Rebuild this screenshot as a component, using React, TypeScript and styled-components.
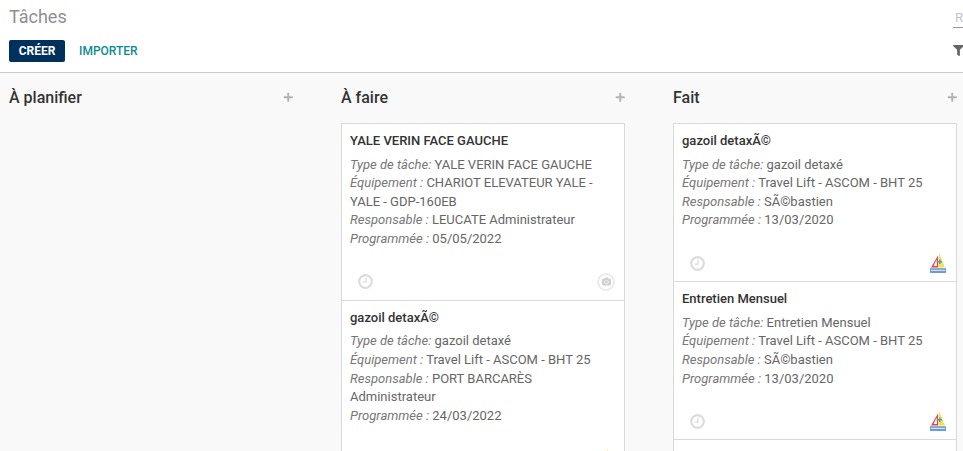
import React, { FC } from 'react';
import styled, { createGlobalStyle } from 'styled-components';
import { FaCamera, FaFilter, FaPlus } from 'react-icons/fa';

type Task = {
  title: string;
  type: string;
  equipment: string;
  owner: string;
  date: string;
  badge: 'camera' | 'logo';
};

type Column = {
  name: string;
  tasks: Task[];
};

const COLUMNS: Column[] = [
  { name: 'À planifier', tasks: [] },
  {
    name: 'À faire',
    tasks: [
      {
        title: 'YALE VERIN FACE GAUCHE',
        type: 'YALE VERIN FACE GAUCHE',
        equipment: 'CHARIOT ELEVATEUR YALE - YALE - GDP-160EB',
        owner: 'LEUCATE Administrateur',
        date: '05/05/2022',
        badge: 'camera',
      },
      {
        title: 'gazoil detaxÃ©',
        type: 'gazoil detaxé',
        equipment: 'Travel Lift - ASCOM - BHT 25',
        owner: 'PORT BARCARÈS Administrateur',
        date: '24/03/2022',
        badge: 'logo',
      },
    ],
  },
  {
    name: 'Fait',
    tasks: [
      {
        title: 'gazoil detaxÃ©',
        type: 'gazoil detaxé',
        equipment: 'Travel Lift - ASCOM - BHT 25',
        owner: 'SÃ©bastien',
        date: '13/03/2020',
        badge: 'logo',
      },
      {
        title: 'Entretien Mensuel',
        type: 'Entretien Mensuel',
        equipment: 'Travel Lift - ASCOM - BHT 25',
        owner: 'SÃ©bastien',
        date: '13/03/2020',
        badge: 'logo',
      },
      {
        title: 'Entretien Mensuel',
        type: 'Entretien Mensuel',
        equipment: 'Travel Lift - ASCOM - BHT 25',
        owner: 'SÃ©bastien',
        date: '13/03/2020',
        badge: 'logo',
      },
    ],
  },
];

// Little sailboat logo of the harbour
const SailLogo: FC = () => (
  <LogoSvg viewBox="0 0 16 20" aria-hidden="true">
    <path d="M9 0 L15 14.5 L8 14.5 Z" fill="#f7e04f" />
    <path d="M8 2.5 L1 14.5 L8 14.5 Z" fill="#e2454d" />
    <path d="M6.6 6.5 L3.6 13 L7 13 Z" fill="#fff" />
    <path d="M9 6.6 h1.5 v1.5 h1.5 v1.5 h-1.5 v1.5 h-1.5 v-1.5 h-1.5 v-1.5 h1.5 Z" fill="#4aa5b5" />
    <rect x="0" y="15.2" width="16" height="4.8" fill="#6d9bd4" />
    <rect x="1" y="16.8" width="14" height="1.2" fill="#d5e1f1" />
  </LogoSvg>
);

// Clock as in the reference, hands at nine o'clock
const ClockIcon: FC = () => (
  <ClockSvg viewBox="0 0 15 15" aria-hidden="true">
    <circle cx="7.5" cy="7.5" r="6.3" fill="none" stroke="currentColor" strokeWidth="2.2" />
    <path d="M8 3.6 V8.1 H4.8" fill="none" stroke="currentColor" strokeWidth="1.3" />
  </ClockSvg>
);

const TaskCard: FC<{ task: Task }> = ({ task }) => (
  <Card>
    <CardTitle>{task.title}</CardTitle>
    <CardBody>
      <Line>
        <Label>Type de tâche:</Label> {task.type}
      </Line>
      <Line>
        <Label>Équipement :</Label> {task.equipment}
      </Line>
      <Line>
        <Label>Responsable :</Label> {task.owner}
      </Line>
      <Line>
        <Label>Programmée :</Label> {task.date}
      </Line>
    </CardBody>
    <CardFooter>
      <ClockIcon />
      {task.badge === 'camera' ? (
        <CameraBadge>
          <FaCamera />
        </CameraBadge>
      ) : (
        <SailLogo />
      )}
    </CardFooter>
  </Card>
);

const App: FC = () => (
  <>
    <GlobalStyle />
    <Page>
      <ControlPanel>
        <LeftPanel>
          <PageTitle>Tâches</PageTitle>
          <Buttons>
            <PrimaryButton>CRÉER</PrimaryButton>
            <LinkButton>IMPORTER</LinkButton>
          </Buttons>
        </LeftPanel>
        <RightPanel>
          <SearchInput placeholder="Rechercher..." />
          <FilterRow>
            <FaFilter />
            <span>Filtres</span>
          </FilterRow>
        </RightPanel>
      </ControlPanel>

      <Board>
        {COLUMNS.map((column) => (
          <BoardColumn key={column.name}>
            <ColumnHeader>
              <ColumnTitle>{column.name}</ColumnTitle>
              <AddIcon />
            </ColumnHeader>
            {column.tasks.map((task, i) => (
              <TaskCard key={i} task={task} />
            ))}
          </BoardColumn>
        ))}
      </Board>
    </Page>
  </>
);

export default App;

/* Styled components */

const GlobalStyle = createGlobalStyle`
  html, body {
    margin: 0;
    padding: 0;
    overflow: hidden;
    background: #f9f9f9;
  }

  * {
    box-sizing: border-box;
  }
`;

const Page = styled.div`
  width: 963px;
  height: 451px;
  overflow: hidden;
  display: flex;
  flex-direction: column;
  font-family: Roboto, 'Noto Sans', sans-serif;
  font-size: 13px;
`;

const ControlPanel = styled.header`
  flex: none;
  height: 73px;
  display: flex;
  overflow: hidden;
  background: #fff;
  border-bottom: 1px solid #cccccc;
`;

const LeftPanel = styled.div`
  flex: none;
  width: 953px;
  padding: 6px 0 0 9px;
`;

const PageTitle = styled.h1`
  margin: 0;
  height: 22px;
  font-size: 18px;
  line-height: 22px;
  font-weight: 400;
  color: #8f8f8f;
`;

const Buttons = styled.div`
  display: flex;
  align-items: center;
  gap: 14px;
  margin-top: 12px;
`;

const PrimaryButton = styled.button`
  width: 56px;
  height: 22px;
  padding: 0;
  border: none;
  border-radius: 2px;
  background: #00305c;
  color: #fff;
  font: 700 12px/22px Roboto, sans-serif;
`;

const LinkButton = styled.button`
  padding: 0;
  border: none;
  background: none;
  color: #0c8b8f;
  font: 500 12px/22px Roboto, sans-serif;
`;

const RightPanel = styled.div`
  flex: none;
  width: 300px;
`;

const SearchInput = styled.input`
  display: block;
  width: 300px;
  height: 20px;
  margin-top: 8px;
  padding: 0 2px;
  border: none;
  border-bottom: 1px solid #999;
  outline: none;
  font: 400 13px Roboto, sans-serif;

  &::placeholder {
    color: #c4c4c4;
  }
`;

const FilterRow = styled.div`
  display: flex;
  align-items: center;
  gap: 5px;
  margin-top: 16px;
  color: #666;
  font-size: 11px;

  svg {
    font-size: 11px;
  }
`;

const Board = styled.main`
  flex: 1;
  min-height: 0;
  display: flex;
  gap: 48px;
  padding: 0 0 0 9px;
  background: #f9f9f9;
`;

const BoardColumn = styled.section`
  flex: none;
  width: 284px;
`;

const ColumnHeader = styled.div`
  height: 50px;
  padding-bottom: 2px;
  display: flex;
  align-items: center;
  justify-content: space-between;
`;

const ColumnTitle = styled.h2`
  margin: 0;
  font-size: 16px;
  font-weight: 500;
  color: #333;
`;

const AddIcon = styled(FaPlus)`
  font-size: 10.5px;
  color: #b3b3b3;
`;

const Card = styled.article`
  padding: 7px 8px 8px;
  background: #fff;
  border: 1px solid #d9d9d9;

  & + & {
    margin-top: -1px;
  }
`;

const CardTitle = styled.div`
  height: 19px;
  margin-bottom: 5.6px;
  font-weight: 500;
  line-height: 19px;
  color: #333;
`;

const CardBody = styled.div`
  color: #666;
  line-height: 18.57px;
`;

const Line = styled.div``;

const Label = styled.i`
  color: #777;
`;

const CardFooter = styled.div`
  height: 20px;
  margin-top: 23.4px;
  display: flex;
  align-items: center;
  justify-content: space-between;
  padding: 0 1px 0 7.5px;
`;

const ClockSvg = styled.svg`
  width: 15px;
  height: 15px;
  color: #dcdcdc;
`;

const CameraBadge = styled.span`
  width: 18px;
  height: 18px;
  display: flex;
  align-items: center;
  justify-content: center;
  border: 2px solid #eaeaea;
  border-radius: 50%;
  color: #d0d0d0;
  font-size: 9px;
`;

const LogoSvg = styled.svg`
  width: 16px;
  height: 20px;
  margin-right: 1px;
`;
